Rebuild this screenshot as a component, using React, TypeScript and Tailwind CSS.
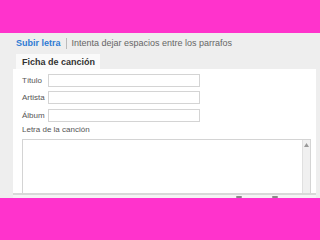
import React from "react";

export default function App() {
  const font = { fontFamily: '"Liberation Sans", Arial, sans-serif' };
  return (
    <div className="w-[320px] h-[240px] flex flex-col overflow-hidden bg-[#ff33cc]" style={font}>
      <div className="h-[33px] shrink-0 bg-[#ff33cc]" />
      <div className="h-[165px] shrink-0 bg-[#eeeeee] flex flex-col overflow-hidden">
        <div className="h-[21px] shrink-0 flex items-center pl-[16px] text-[9px] leading-none whitespace-nowrap">
          <span className="font-bold text-[#2f7bd4]">Subir letra</span>
          <span className="w-px h-[11px] bg-[#bbbbbb] mx-[5px]" />
          <span className="text-[#666666]">Intenta dejar espacios entre los parrafos</span>
        </div>
        <div className="h-[15px] shrink-0 flex pl-[16px]">
          <div className="w-[84px] bg-[#fafafa] flex items-center pl-[6px] pt-[2px] text-[9px] font-bold text-[#333333] leading-none whitespace-nowrap">
            Ficha de canción
          </div>
        </div>
        <div className="ml-[13px] w-[303px] bg-white flex flex-col pl-[9px] pt-[5px] flex-1 min-h-0 relative">
          <div className="flex items-center h-[13px] text-[8px] text-[#555555] leading-none">
            <span className="w-[26px]">Título</span>
            <div className="w-[152px] h-[13px] border border-[#d4d4d4] bg-white" />
          </div>
          <div className="flex items-center h-[13px] mt-[4px] text-[8px] text-[#555555] leading-none">
            <span className="w-[26px]">Artista</span>
            <div className="w-[152px] h-[13px] border border-[#d4d4d4] bg-white" />
          </div>
          <div className="flex items-center h-[13px] mt-[5px] text-[8px] text-[#555555] leading-none">
            <span className="w-[26px]">Álbum</span>
            <div className="w-[152px] h-[13px] border border-[#d4d4d4] bg-white" />
          </div>
          <div className="mt-[2px] h-[12px] flex items-center text-[8px] text-[#555555] leading-none whitespace-nowrap">
            Letra de la canción
          </div>
          <div className="mt-[3px] w-[289px] flex-1 border border-[#d4d4d4] border-b-0 flex justify-end">
            <div className="w-[8px] bg-[#f0f0f0] border-l border-[#e0e0e0] flex justify-center pt-[3px]">
              <svg width="5" height="4" viewBox="0 0 5 4">
                <path d="M0 4 L2.5 0 L5 4 Z" fill="#999999" />
              </svg>
            </div>
          </div>
          <div className="h-[2px] bg-[#d8d8d8] -ml-[9px] w-[303px]" />
          <div className="h-[3px] bg-[#f4f4f4] -ml-[9px] w-[303px] relative">
            <span className="absolute left-[223px] top-[1px] w-[6px] h-[2px] bg-[#888888] rounded-full" />
            <span className="absolute left-[259px] top-[1px] w-[6px] h-[2px] bg-[#888888] rounded-full" />
          </div>
        </div>
      </div>
      <div className="flex-1 bg-[#ff33cc]" />
    </div>
  );
}
